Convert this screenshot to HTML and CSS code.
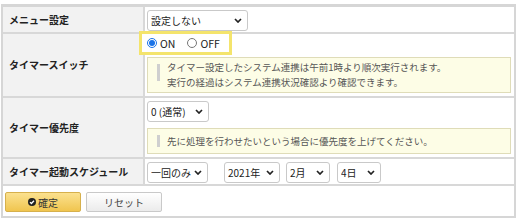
FILE: index.html
```html
<!DOCTYPE html>
<html>

<head>
  <meta charset="UTF-8">
  <meta name="viewport" content="width=device-width, initial-scale=1">
  <title>タイマー設定</title>
  <link rel="stylesheet" href="styles.css">
</head>

<body>
  <div class="panel">
    <div class="form">
      <div class="label">メニュー設定</div>
      <div class="field row-menu">
        <span class="sel w-menu"><select><option>設定しない</option></select>
          <svg class="chev" width="8" height="5" viewBox="0 0 8 5"><polyline points="1,1 4,4 7,1" /></svg></span>
      </div>

      <div class="label">タイマースイッチ</div>
      <div class="field row-switch">
        <div class="switch">
          <label><input type="radio" name="sw" checked>ON</label>
          <label><input type="radio" name="sw">OFF</label>
        </div>
        <div class="note">タイマー設定したシステム連携は午前1時より順次実行されます。<br>実行の経過はシステム連携状況確認より確認できます。</div>
      </div>

      <div class="label">タイマー優先度</div>
      <div class="field row-prio">
        <span class="sel w-prio"><select><option>0 (通常)</option></select>
          <svg class="chev" width="8" height="5" viewBox="0 0 8 5"><polyline points="1,1 4,4 7,1" /></svg></span>
        <div class="note note-single">先に処理を行わせたいという場合に優先度を上げてください。</div>
      </div>

      <div class="label">タイマー起動スケジュール</div>
      <div class="field row-sched">
        <span class="sel w-once"><select><option>一回のみ</option></select>
          <svg class="chev" width="8" height="5" viewBox="0 0 8 5"><polyline points="1,1 4,4 7,1" /></svg></span>
        <span class="sel w-year"><select><option>2021年</option></select>
          <svg class="chev" width="8" height="5" viewBox="0 0 8 5"><polyline points="1,1 4,4 7,1" /></svg></span>
        <span class="sel w-month"><select><option>2月</option></select>
          <svg class="chev" width="8" height="5" viewBox="0 0 8 5"><polyline points="1,1 4,4 7,1" /></svg></span>
        <span class="sel w-day"><select><option>4日</option></select>
          <svg class="chev" width="8" height="5" viewBox="0 0 8 5"><polyline points="1,1 4,4 7,1" /></svg></span>
      </div>
    </div>

    <div class="actions">
      <button class="btn btn-ok">
        <svg width="8" height="8" viewBox="0 0 8 8"><circle cx="4" cy="4" r="4" fill="#222" /><polyline points="2,4.1 3.4,5.5 6,2.8" fill="none" stroke="#fff" stroke-width="1.3" /></svg>確定
      </button>
      <button class="btn">リセット</button>
    </div>
  </div>
</body>

</html>
```

FILE: styles.css
```css
body {
  margin: 0;
  background-color: #fff;
  font-family: "Noto Sans CJK JP", "Noto Sans", sans-serif;
  color: #222;
}

.panel {
  margin: 4px 4px 0 1px;
  border: 2px solid #d6d6d6;
  border-top-width: 3px;
  padding-bottom: 4px;
}

.form {
  display: grid;
  grid-template-columns: 142px 1fr;
}

.label {
  display: flex;
  align-items: center;
  padding-left: 6px;
  background-color: #f2f2f2;
  border-right: 2px solid #d8d8d8;
  border-bottom: 2px solid #d8d8d8;
  font-size: 10px;
  font-weight: bold;
  line-height: 14px;
}

.field {
  display: flex;
  flex-wrap: wrap;
  align-items: flex-start;
  padding: 3px 3px 1px 2px;
  border-bottom: 2px solid #d8d8d8;
}

.row-switch {
  padding-top: 0;
  padding-bottom: 3px;
}

.row-prio {
  padding-bottom: 3px;
}

.sel {
  position: relative;
  display: block;
  margin-right: 6px;
}

.sel select {
  appearance: none;
  -webkit-appearance: none;
  box-sizing: border-box;
  display: block;
  width: 100%;
  height: 21px;
  margin: 0;
  padding: 0 0 0 3px;
  border: 1px solid #c9c9c9;
  border-radius: 3px;
  background-color: #fff;
  font-family: inherit;
  font-size: 10px;
  color: #222;
}

.chev {
  position: absolute;
  right: 6px;
  top: 8px;
  pointer-events: none;
}

.chev polyline {
  fill: none;
  stroke: #222;
  stroke-width: 1.7;
}

.w-menu { width: 101px; }
.w-prio { width: 62px; }
.w-once { width: 61px; margin-right: 16px; }
.w-year { width: 56px; }
.w-month { width: 44px; margin-right: 7px; }
.w-day { width: 44px; }

.switch {
  display: flex;
  align-items: center;
  box-sizing: border-box;
  width: 87px;
  height: 18px;
  margin-left: -5px;
  padding-left: 5px;
  background-color: #fff;
  outline: 3px solid #f4e46c;
  font-size: 10.5px;
}

.switch label {
  display: flex;
  align-items: center;
  margin-right: 12px;
}

.switch input {
  width: 10px;
  height: 10px;
  margin: 0 3px 0 0;
  accent-color: #1a73e8;
}

.note {
  position: relative;
  flex-basis: 100%;
  box-sizing: border-box;
  margin-top: 5px;
  padding: 2px 4px 2px 19px;
  border: 1px solid #dfdcb8;
  background-color: #fdfde6;
  font-size: 9.5px;
  line-height: 15px;
  color: #555;
}

.note::before {
  content: "";
  position: absolute;
  left: 9px;
  top: 6px;
  bottom: 11px;
  width: 3px;
  background-color: #cfcfcf;
}

.note-single {
  margin-top: 6px;
  padding-top: 5px;
  padding-bottom: 4px;
}

.note-single::before {
  top: 6px;
  bottom: 6px;
}

.actions {
  display: flex;
  gap: 5px;
  padding: 6px 0 0 2px;
}

.btn {
  display: flex;
  align-items: center;
  justify-content: center;
  gap: 2px;
  width: 76px;
  height: 20px;
  margin: 0;
  padding: 0;
  border: 1px solid #c9c9c9;
  border-radius: 2px;
  background: linear-gradient(#ffffff, #ebebeb);
  font-family: inherit;
  font-size: 10px;
  color: #444;
}

.btn-ok {
  border-color: #d6b04c;
  background: linear-gradient(#fbe18f, #f0c54f);
  color: #333;
}
```
